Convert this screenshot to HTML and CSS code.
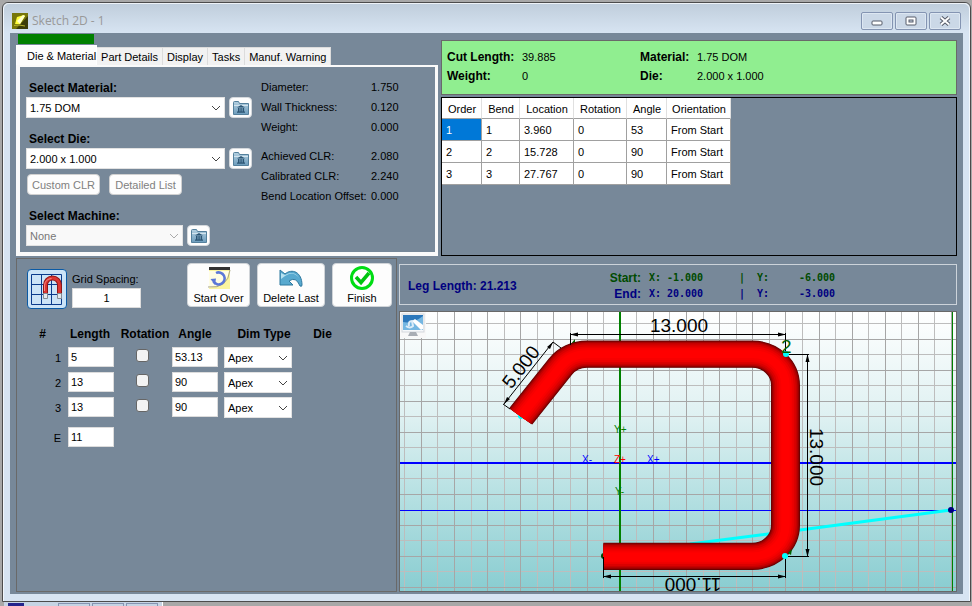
FILE: index.html
```html
<!DOCTYPE html>
<html lang="en">
<head>
<meta charset="utf-8">
<title>Sketch 2D - 1</title>
<link rel="stylesheet" href="styles.css">
</head>
<body>
<svg class="defs" width="0" height="0" aria-hidden="true">
  <defs>
    <linearGradient id="folder" x1="0" y1="0" x2="0" y2="1"><stop offset="0" stop-color="#b4d0e0"/><stop offset="1" stop-color="#6c9cbc"/></linearGradient>
    <symbol id="library" viewBox="0 0 16 14">
      <path d="M.5 1.500q0-1 1-1h4l1 2h9v11H.5z" fill="url(#folder)" stroke="#54809c"/>
      <path d="M1 4.500h14" stroke="#d3e4ee"/>
      <path d="M4 6.500 8 4l4 2.500zM5 7h1.500v3.500H5zM7.400 7h1.300v3.500H7.400zM9.600 7h1.500v3.500H9.600zM4 10.500h8v1.300H4z" fill="#2c5574"/>
    </symbol>
    <symbol id="chevron" viewBox="0 0 10 6"><path d="M1 1l4 4 4-4" fill="none" stroke="currentColor"/></symbol>
  </defs>
</svg>
<main class="window">
  <header class="titlebar">
    <svg class="app-icon" viewBox="0 0 16 16"><rect width="16" height="16" fill="#3c3c06"/><path d="M0 0h16v3L4 16H0z" fill="#77760a"/><path d="M3 11 5 4l7-2 1 1-5 8z" fill="#ffff3c"/><path d="M5 8 11 2l2 1-5 8z" fill="#ffffc8"/><path d="M2 12.500 7 12l6 1" stroke="#b8b42c" fill="none"/></svg>
    <h1>Sketch 2D - 1</h1>
    <div class="window-buttons">
      <button type="button" aria-label="Minimize"><svg viewBox="0 0 12 10"><rect x="1" y="5" width="10" height="4" rx="1" fill="#fff" stroke="#555a68"/></svg></button>
      <button type="button" aria-label="Restore"><svg viewBox="0 0 12 10"><rect x="1" y="1" width="10" height="8" rx="1" fill="#fff" stroke="#555a68"/><rect x="4" y="4" width="4" height="2" fill="#cdd9e8" stroke="#555a68"/></svg></button>
      <button type="button" aria-label="Close"><svg viewBox="0 0 12 10"><path d="M2 1.500 10 8.500M10 1.500 2 8.500" stroke="#555a68" stroke-width="4"/><path d="M2 1.500 10 8.500M10 1.500 2 8.500" stroke="#fff" stroke-width="2"/></svg></button>
    </div>
  </header>

  <div class="client">
    <div class="row row-top">
      <section class="settings">
        <div class="progress"></div>
        <div class="tabs" role="tablist">
          <button type="button" role="tab" class="tab active" aria-selected="true">Die &amp; Material</button>
          <button type="button" role="tab" class="tab">Part Details</button>
          <button type="button" role="tab" class="tab">Display</button>
          <button type="button" role="tab" class="tab">Tasks</button>
          <button type="button" role="tab" class="tab">Manuf. Warning</button>
        </div>
        <div class="tab-panel">
          <div class="pickers">
            <label class="strong" for="material">Select Material:</label>
            <div class="picker">
              <span class="select wide"><select id="material"><option>1.75 DOM</option></select><svg><use href="#chevron"/></svg></span>
              <button type="button" class="lib" aria-label="Material library"><svg><use href="#library"/></svg></button>
            </div>
            <label class="strong" for="die">Select Die:</label>
            <div class="picker">
              <span class="select wide"><select id="die"><option>2.000 x 1.000</option></select><svg><use href="#chevron"/></svg></span>
              <button type="button" class="lib" aria-label="Die library"><svg><use href="#library"/></svg></button>
            </div>
            <div class="die-actions">
              <button type="button" disabled>Custom CLR</button>
              <button type="button" disabled>Detailed List</button>
            </div>
            <label class="strong" for="machine">Select Machine:</label>
            <div class="picker">
              <span class="select medium"><select id="machine" disabled><option>None</option></select><svg><use href="#chevron"/></svg></span>
              <button type="button" class="lib" aria-label="Machine library"><svg><use href="#library"/></svg></button>
            </div>
          </div>
          <div class="facts">
            <dl><dt>Diameter:</dt><dd>1.750</dd><dt>Wall Thickness:</dt><dd>0.120</dd><dt>Weight:</dt><dd>0.000</dd></dl>
            <dl><dt>Achieved CLR:</dt><dd>2.080</dd><dt>Calibrated CLR:</dt><dd>2.240</dd><dt>Bend Location Offset:</dt><dd>0.000</dd></dl>
          </div>
        </div>
      </section>

      <section class="results">
        <dl class="summary">
          <dt>Cut Length:</dt><dd>39.885</dd><dt>Material:</dt><dd>1.75 DOM</dd>
          <dt>Weight:</dt><dd>0</dd><dt>Die:</dt><dd>2.000 x 1.000</dd>
        </dl>
        <div class="bend-box">
          <table class="bends">
            <colgroup><col class="c-order"><col class="c-bend"><col class="c-loc"><col class="c-rot"><col class="c-angle"><col class="c-orient"></colgroup>
            <thead><tr><th>Order</th><th>Bend</th><th>Location</th><th>Rotation</th><th>Angle</th><th>Orientation</th></tr></thead>
            <tbody>
              <tr><td class="selected">1</td><td>1</td><td>3.960</td><td>0</td><td>53</td><td>From Start</td></tr>
              <tr><td>2</td><td>2</td><td>15.728</td><td>0</td><td>90</td><td>From Start</td></tr>
              <tr><td>3</td><td>3</td><td>27.767</td><td>0</td><td>90</td><td>From Start</td></tr>
            </tbody>
          </table>
        </div>
      </section>
    </div>

    <div class="row row-bottom">
      <section class="editor">
        <div class="toolbar">
          <button type="button" class="snap" aria-label="Snap to grid" aria-pressed="true">
            <svg viewBox="0 0 38 38">
              <path d="M3.500 4.500h30v30h-30zM13.500 4.500v30M23.500 4.500v30M3.500 14.500h30M3.500 24.500h30" fill="none" stroke="#0b3b8c"/>
              <path d="M17.500 25V15a7 7 0 0 1 14 0v10" fill="none" stroke="#8e1616" stroke-width="5"/>
              <path d="M17.500 25V15a7 7 0 0 1 14 0v10" fill="none" stroke="#dc3430" stroke-width="3"/>
              <path d="M16.500 21v-6q1-6 7-6.500" fill="none" stroke="#f58d84"/>
              <path d="M15.500 23.500h4v5h-4zM29.500 23.500h4v5h-4z" fill="#e4e8ec" stroke="#848c94"/>
            </svg>
          </button>
          <div class="spacing"><label for="spacing">Grid Spacing:</label><input id="spacing" type="text" value="1"></div>
          <div class="actions">
            <button type="button" class="action a-start">
              <svg viewBox="0 0 24 24"><path d="M2 1h21v22H2z" fill="#fbf5a0"/><path d="M2 5h20q-2 14-20 17z" fill="#fffde4"/><path d="M2 1h21v3H2z" fill="#333"/><path d="M1 21q20 2 22-17" fill="none" stroke="#aaa684"/><path d="M9 7a6 6 0 1 1-2.500 8.500" fill="none" stroke="#5c78d8" stroke-width="2.500"/><path d="M3.500 13 9 12.500 8 19z" fill="#5c78d8"/></svg>
              Start Over</button>
            <button type="button" class="action a-delete">
              <svg viewBox="0 0 24 24"><path d="M1 4v15h13l-4-4q7-5 11 5 2 1 2-1C23 6 13 2 6 8z" fill="#58a9cf" stroke="#2d789f"/><path d="M2 7v6l4-3q8-6 14 2-5-8-14-3z" fill="#b7e2f1"/></svg>
              Delete Last</button>
            <button type="button" class="action a-finish">
              <svg viewBox="0 0 24 24"><circle cx="12" cy="12" r="10.500" fill="#fff" stroke="#00dd14" stroke-width="3"/><path d="m6 11 5 5.500L19 7" fill="none" stroke="#00c410" stroke-width="3.500"/></svg>
              Finish</button>
          </div>
        </div>
        <table class="legs">
          <colgroup><col class="l-num"><col class="l-len"><col class="l-rot"><col class="l-angle"><col class="l-dim"><col class="l-die"></colgroup>
          <thead><tr><th>#</th><th class="box-head">Length</th><th>Rotation</th><th class="box-head">Angle</th><th class="dim-head">Dim Type</th><th>Die</th></tr></thead>
          <tbody>
            <tr><th>1</th><td><input type="text" value="5" aria-label="Length 1"></td><td class="mid"><input type="checkbox" aria-label="Rotation 1"></td><td><input type="text" value="53.13" aria-label="Angle 1"></td><td><span class="select small"><select aria-label="Dim type 1"><option>Apex</option></select><svg><use href="#chevron"/></svg></span></td><td></td></tr>
            <tr><th>2</th><td><input type="text" value="13" aria-label="Length 2"></td><td class="mid"><input type="checkbox" aria-label="Rotation 2"></td><td><input type="text" value="90" aria-label="Angle 2"></td><td><span class="select small"><select aria-label="Dim type 2"><option>Apex</option></select><svg><use href="#chevron"/></svg></span></td><td></td></tr>
            <tr><th>3</th><td><input type="text" value="13" aria-label="Length 3"></td><td class="mid"><input type="checkbox" aria-label="Rotation 3"></td><td><input type="text" value="90" aria-label="Angle 3"></td><td><span class="select small"><select aria-label="Dim type 3"><option>Apex</option></select><svg><use href="#chevron"/></svg></span></td><td></td></tr>
          </tbody>
          <tbody class="end">
            <tr><th>E</th><td><input type="text" value="11" aria-label="End length"></td><td></td><td></td><td></td><td></td></tr>
          </tbody>
        </table>
      </section>

      <section class="viewer">
        <div class="leg-info">
          <span class="leg-length">Leg Length: 21.213</span>
          <div class="coords">
            <b class="start">Start:</b><span class="start">X:</span><span class="start num">-1.000</span><span class="start bar">|</span><span class="start">Y:</span><span class="start num">-6.000</span>
            <b>End:</b><span>X:</span><span class="num">20.000</span><span class="bar">|</span><span>Y:</span><span class="num">-3.000</span>
          </div>
        </div>
        <div class="stage">
          <svg class="drawing" viewBox="400 312 556 279" preserveAspectRatio="xMinYMin slice" role="img" aria-label="Bent tube sketch">
            <defs>
              <linearGradient id="sky" x1="0" y1="0" x2="0" y2="1"><stop offset="0" stop-color="#fff"/><stop offset=".37" stop-color="#dff1f2"/><stop offset=".7" stop-color="#b0dee0"/><stop offset="1" stop-color="#89cdd1"/></linearGradient>
              <path id="tube" d="M-1-6H8A2 2 0 0 1 10-4V5A2 2 0 0 1 8 7H-2A2 2 0 0 1-3.600 6.200L-6 3"/>
            </defs>
            <rect x="400" y="312" width="556" height="279" fill="url(#sky)"/>
            <g fill="none" shape-rendering="crispEdges">
              <path stroke="#bdbdbd" d="M404.500 312v279M437.500 312v279M471.500 312v279M504.500 312v279M537.500 312v279M570.500 312v279M603.500 312v279M636.500 312v279M669.500 312v279M703.500 312v279M736.500 312v279M769.500 312v279M802.500 312v279M835.500 312v279M868.500 312v279M901.500 312v279M934.500 312v279M400 323.500h556M400 354.500h556M400 385.500h556M400 416.500h556M400 447.500h556M400 478.500h556M400 540.500h556M400 571.500h556"/>
              <path stroke="#a6a6a6" d="M421.500 312v279M454.500 312v279M487.500 312v279M520.500 312v279M553.500 312v279M587.500 312v279M653.500 312v279M686.500 312v279M719.500 312v279M752.500 312v279M785.500 312v279M819.500 312v279M852.500 312v279M885.500 312v279M918.500 312v279M951.500 312v279M400 339.500h556M400 370.500h556M400 401.500h556M400 432.500h556M400 494.500h556M400 525.500h556M400 556.500h556M400 587.500h556"/>
              <path stroke="#0000ff" stroke-width="2" d="M400 463h556"/>
              <path stroke="#0000ff" d="M400 510.500h556"/>
              <path stroke="#008000" stroke-width="2" d="M620 312v279"/>
              <path stroke="#008000" d="M952.500 312v279"/>
            </g>
            <path d="M690 544 800 530 951 510" fill="none" stroke="#00ffff" stroke-width="3"/>
            <circle cx="604" cy="556" r="3" fill="#004400"/>
            <circle cx="521" cy="416" r="3" fill="#00ffff"/>
            <path d="m570 345 5-6v7z" fill="#006400"/>
            <g transform="translate(620 463) scale(16.550 -15.550)" fill="none">
              <use href="#tube" stroke="#600000" stroke-width="1.750"/>
              <use href="#tube" stroke="#860000" stroke-width="1.670"/>
              <use href="#tube" stroke="#a80000" stroke-width="1.560"/>
              <use href="#tube" stroke="#c40000" stroke-width="1.420"/>
              <use href="#tube" stroke="#da0000" stroke-width="1.240"/>
              <use href="#tube" stroke="#ec0000" stroke-width="1"/>
              <use href="#tube" stroke="#f80000" stroke-width=".75"/>
              <use href="#tube" stroke="#ff0000" stroke-width=".5"/>
            </g>
            <path d="M570.500 333v12M570 334.500h216M785.500 333v21M788 354.500h21M807.500 354v203M788 556.500h21M603.500 557v21M603 576.500h183M785.500 557v21" fill="none" stroke="#000" shape-rendering="crispEdges"/>
            <path d="M504 404 553 342M503 404l7 5M553 342l8 6" fill="none" stroke="#000"/>
            <path d="m570 334.500 8-2v4zM786 334.500l-8-2v4zM807.500 354l-2 8h4zM807.500 557l-2-8h4zM603 576.500l8-2v4zM786 576.500l-8-2v4zM504 404l3-7 3 2zM553 342l-3 7-3-2z"/>
            <circle cx="786" cy="354" r="3" fill="#00ffff"/>
            <path d="m788 553 4-4-1 6z" fill="#006400"/>
            <circle cx="785" cy="556" r="3" fill="#00ffff"/>
            <circle cx="951" cy="510" r="3" fill="#000080"/>
            <g class="dims" text-anchor="middle">
              <text x="679" y="332">13.000</text>
              <text transform="translate(810 457) rotate(90)">13.000</text>
              <text transform="translate(526 371) rotate(-52)">5.000</text>
              <text transform="translate(693 578) rotate(180)">11.000</text>
            </g>
            <g class="axis">
              <text class="bend-no" x="781" y="353">2</text>
              <text class="green" x="614" y="433">Y+</text><text class="green" x="615" y="495">Y-</text>
              <text class="blue" x="582" y="463">X-</text><text class="blue" x="647" y="463">X+</text>
              <text class="red" x="614" y="463">Z+</text>
            </g>
          </svg>
          <button type="button" class="view-button" aria-label="Display view">
            <svg viewBox="0 0 24 24"><rect x="1" y="1" width="22" height="18" fill="#f6f8fa" stroke="#d3d7dc"/><rect x="2" y="2" width="20" height="15" fill="#2c78bb"/><path d="M2 9q10 2 20-6v14H2z" fill="#75b7e2"/><path d="m11 8 3-2 8 6v4l-2 1z" fill="#fff"/><path d="M5 13q4 3 7 0l-1-5q-4 0-3 5" fill="none" stroke="#dcecf8" stroke-width="2"/><path d="M9 19h6l2 4H7z" fill="#a8adb4"/></svg>
          </button>
        </div>
      </section>
    </div>
  </div>
</main>
<div class="docked"><i class="d-icon"></i><i class="d-btn"></i><i class="d-btn"></i><i class="d-btn"></i></div>
</body>
</html>
```
FILE: styles.css
```css
* { box-sizing: border-box; }
body {
  margin: 0;
  padding: 2px 1px 0 2px;
  min-height: 100vh;
  display: flex;
  flex-direction: column;
  background: #a8a8a8;
  font: 11px/14px "Liberation Sans", Arial, sans-serif;
  color: #000;
}
.defs { position: absolute; }
button, input, select { font: inherit; color: inherit; margin: 0; padding: 0; }
button { cursor: pointer; }
dl, dd, h1 { margin: 0; }

.window {
  flex: 1;
  display: flex;
  flex-direction: column;
  padding: 0 7px 7px;
  border: 1px solid #4c4c4c;
  border-radius: 6px 6px 0 0;
  background: #d7e4f2;
  box-shadow: inset 1px 1px 0 #f2f7fc, inset -1px 0 0 #f2f7fc;
}
.titlebar {
  height: 30px;
  margin: 0 -6px;
  padding: 6px 8px 0;
  display: flex;
  align-items: center;
  gap: 4px;
  border-radius: 5px 5px 0 0;
  background: linear-gradient(#bfcddb, #d7e4f2);
  box-shadow: inset 0 1px 0 #eef3f8;
}
.app-icon { width: 16px; height: 16px; }
.titlebar h1 { flex: 1; font: 12px/16px "Open Sans", sans-serif; color: #999; }
.window-buttons { display: flex; gap: 2px; }
.window-buttons button {
  width: 32px;
  height: 18px;
  display: grid;
  place-items: center;
  border: 1px solid #8494b2;
  border-radius: 2px;
  background: #cbd8e7;
  box-shadow: inset 0 0 0 1px #dde7f2;
}
.window-buttons svg { width: 12px; height: 10px; }

.client {
  flex: 1;
  display: flex;
  flex-direction: column;
  gap: 2px;
  padding: 1px 6px 2px;
  background: #778899;
}
.row { display: flex; }
.row-top { gap: 3px; }
.row-bottom { flex: 1; gap: 2px; }

.settings { width: 422px; flex: none; }
.progress { width: 76px; height: 10px; margin: 0 0 1px 2px; background: #008000; }
.tabs { display: flex; align-items: flex-end; height: 20px; }
.tab {
  height: 18px;
  padding: 0 4px;
  border: 1px solid #dcdcdc;
  border-bottom: 0;
  background: #f2f2f2;
  white-space: nowrap;
}
.tab + .tab { border-left: 0; }
.tab.active { height: 20px; padding: 0 0 0 10px; border-color: #fff; background: #fcfcfc; }
.tab-panel {
  height: 191px;
  padding: 13px 6px 0;
  display: flex;
  gap: 9px;
  border: solid #fafafa;
  border-width: 2px 3px 4px 4px;
}
.pickers { display: flex; flex-direction: column; width: 226px; }
.strong { font-weight: bold; font-size: 12px; line-height: 16px; padding-left: 3px; margin-bottom: 1px; }
.picker { display: flex; gap: 4px; margin-bottom: 13px; }
.select { display: inline-grid; align-items: center; height: 21px; }
.select select {
  grid-area: 1 / 1;
  width: 100%;
  height: 21px;
  padding: 0 20px 0 3px;
  appearance: none;
  border: 1px solid #e2e2e2;
  border-radius: 0;
  background: #fff;
  opacity: 1;
}
.select svg { grid-area: 1 / 1; justify-self: end; width: 10px; height: 6px; margin-right: 4px; color: #444; pointer-events: none; }
.select select:disabled { background: #f9f9f9; color: #777; }
.select select:disabled + svg { color: #aaa; }
.wide { width: 199px; }
.medium { width: 157px; }
.small { width: 68px; }
.lib {
  width: 23px;
  height: 21px;
  display: grid;
  place-items: center;
  border: 1px solid #d4d8dc;
  border-radius: 4px;
  background: #fdfdfd;
}
.lib svg { width: 16px; height: 14px; }
.die-actions { display: flex; gap: 9px; margin: -8px 0 13px 1px; }
.die-actions button {
  width: 73px;
  height: 21px;
  border: 1px solid #d0d0d0;
  border-radius: 4px;
  background: #fdfdfd;
  color: #808080;
  white-space: nowrap;
}
.facts { display: grid; align-content: start; gap: 9px; line-height: 20px; white-space: nowrap; margin-top: -3px; }
.facts dl { display: grid; grid-template-columns: 106px auto; column-gap: 4px; }

.results { flex: 1; display: flex; flex-direction: column; gap: 2px; padding-top: 6px; }
.summary {
  display: grid;
  grid-template-columns: 75px 118px 57px auto;
  align-content: start;
  height: 55px;
  padding: 7px 5px;
  border: 1px solid #696969;
  background: #90ee90;
  line-height: 19px;
  white-space: nowrap;
}
.summary dt { font-weight: bold; font-size: 12px; }
.bend-box { flex: 1; border: 1px solid #000; }
.bends { table-layout: fixed; width: 289px; border-spacing: 0; background: #fff; }
.bends th, .bends td { padding: 0; border-right: 1px solid #a0a0a0; border-bottom: 1px solid #a0a0a0; white-space: nowrap; }
.bends th { height: 21px; padding: 1px 0 0 1px; font-weight: normal; border-right-color: #e0e0e0; }
.bends td { height: 22px; padding-left: 4px; }
.bends .selected { background: #0078d7; color: #fff; }
.c-order { width: 40px; }
.c-bend { width: 38px; }
.c-loc { width: 54px; }
.c-rot { width: 53px; }
.c-angle { width: 40px; }
.c-orient { width: 64px; }

.editor { width: 381px; flex: none; border: 1px solid #696969; }
.toolbar { display: flex; gap: 5px; padding: 4px 4px 0 10px; height: 50px; }
.snap { width: 40px; height: 40px; margin-top: 6px; border: 1px solid #0a5aa5; border-radius: 4px; background: #cce4f7; }
.snap svg { display: block; width: 38px; height: 38px; }
.spacing { display: flex; flex-direction: column; gap: 2px; width: 69px; padding-top: 9px; white-space: nowrap; }
.spacing input { text-align: center; width: 69px; }
input[type="text"] { height: 20px; padding: 0 2px; border: 1px solid #dcdcdc; background: #fff; }
.actions { display: flex; gap: 7px; margin-left: auto; }
.action {
  height: 44px;
  display: flex;
  flex-direction: column;
  align-items: center;
  gap: 1px;
  padding: 2px 0 0;
  border: 1px solid #d0d4d8;
  border-radius: 4px;
  background: #fdfdfd;
  white-space: nowrap;
}
.action svg { width: 24px; height: 24px; }
.a-start { width: 63px; }
.a-delete { width: 68px; }
.a-finish { width: 60px; }

.legs { table-layout: fixed; width: 328px; margin-top: 16px; border-collapse: collapse; }
.legs th, .legs td { padding: 0; height: 25px; vertical-align: top; }
.legs thead th { height: 22px; font-size: 12px; line-height: 18px; white-space: nowrap; }
.legs thead .box-head { padding-right: 6px; }
.legs thead .dim-head { padding-left: 4px; }
.legs tbody th { font-weight: normal; text-align: right; padding: 4px 7px 0 0; }
.legs input[type="text"] { display: block; width: 46px; }
.legs .select { vertical-align: top; }
.legs .mid { text-align: center; padding: 2px 6px 0 0; }
.legs .end th, .legs .end td { padding-top: 5px; }
.legs .end th { padding-top: 9px; }
input[type="checkbox"] { appearance: none; width: 13px; height: 13px; border: 1px solid #666; border-radius: 3px; background: #f3f3f3; vertical-align: top; }
.l-num { width: 51px; }
.l-len { width: 50px; }
.l-rot { width: 54px; }
.l-angle { width: 52px; }
.l-dim { width: 76px; }
.l-die { width: 45px; }

.viewer { flex: 1; min-width: 0; display: flex; flex-direction: column; gap: 6px; padding-top: 6px; }
.leg-info {
  height: 41px;
  display: flex;
  align-items: center;
  padding: 3px 8px 0;
  border: 1px solid #ccd3da;
  color: #000080;
  white-space: nowrap;
}
.leg-length { width: 193px; font-weight: bold; font-size: 12px; }
.coords {
  display: grid;
  grid-template-columns: 48px 18px 36px 54px 18px 60px;
  font: bold 10px/16px "DejaVu Sans Mono", monospace;
}
.coords b { font: bold 12px/16px "Liberation Sans", Arial, sans-serif; text-align: right; padding-right: 8px; }
.coords .num { text-align: right; }
.coords .bar { padding-left: 36px; }
.coords .start { color: #004b00; }
.stage { flex: 1; position: relative; display: flex; border: 1px solid #696969; background: #89cdd1; }
.drawing { display: block; width: 100%; }
.dims { font-size: 19px; }
.axis { font-size: 10px; }
.axis .green { fill: #008000; }
.axis .blue { fill: #0000ff; }
.axis .red { fill: #ff0000; }
.axis .bend-no { fill: #006400; font-size: 19px; }
.view-button { position: absolute; left: 0; top: 0; width: 26px; height: 26px; border: 0; background: #f8f8f8; }
.view-button svg { display: block; width: 24px; height: 24px; margin: 1px; }

.docked {
  width: 159px;
  height: 4px;
  margin-left: 2px;
  padding-left: 4px;
  display: flex;
  gap: 2px;
  background: #c6d4e4;
  border-right: 1px solid #fff;
}
.docked i { margin-top: 1px; height: 3px; }
.d-icon { width: 16px; margin-right: 32px; background: #24248c; }
.d-btn { width: 32px; border: 1px solid #8494b2; border-bottom: 0; }
```
